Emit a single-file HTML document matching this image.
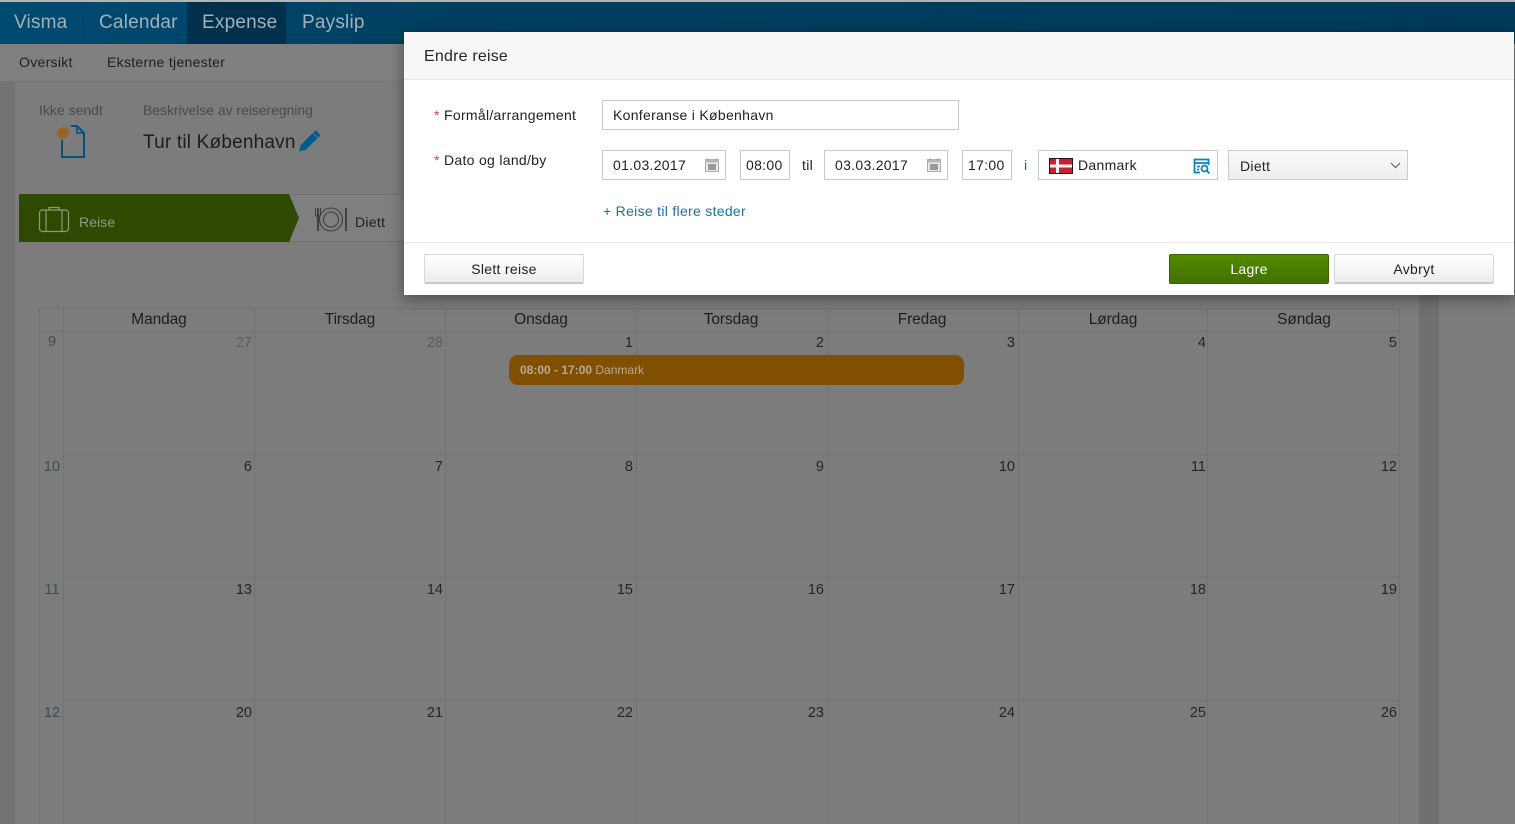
<!DOCTYPE html>
<html lang="no"><head><meta charset="utf-8"><title>Endre reise</title>
<style>
html,body{margin:0;padding:0;width:1515px;height:824px;overflow:hidden;background:#7c7c7c}
body{position:relative;font-family:"Liberation Sans",sans-serif;font-size:14px;color:#222}
div,span,a,svg{position:absolute}
.t{white-space:nowrap;line-height:18px;letter-spacing:.3px}
.nav{font-size:19px;color:#a2b1bb;line-height:24px;top:11px;white-space:nowrap;letter-spacing:.2px}
.h{top:311px;width:120px;text-align:center;font-size:15.5px;line-height:18px;color:#1d1d1d;letter-spacing:-.1px}
.n{width:30px;text-align:right;font-size:14.5px;line-height:16px;color:#252525}
.w{width:24px;left:40px;text-align:center;font-size:14.5px;line-height:16px;color:#404c55}
.vl{top:308px;width:1px;height:516px;background:#727272}
.hl{left:40px;width:1359px;height:1px;background:#727272}
.inp{background:#fff;border:1px solid #c8c8c8;box-sizing:border-box;height:30px}
.btn{box-sizing:border-box;height:30px;border-radius:2px;text-align:center;line-height:29px;white-space:nowrap;letter-spacing:.3px}
.g{background:linear-gradient(#fff,#ececec);border:1px solid #d8d8d8;border-bottom:2px solid #c9c9c9;color:#222}
</style></head><body>

<div style="left:0;top:0;width:15px;height:824px;background:#737373;top:81px"></div>
<div style="left:1419px;top:295px;width:20px;height:529px;background:#707070"></div>

<!-- top nav -->
<div style="left:0;top:0;width:1515px;height:2px;background:#b5b5b5"></div>
<div style="left:0;top:2px;width:1515px;height:42px;background:linear-gradient(90deg,#004a70 0,#003f60 30%,#003a5a 100%)"></div>
<div style="left:187px;top:2px;width:99px;height:42px;background:#00304c"></div>
<div style="left:83px;top:2px;width:1px;height:42px;background:#014163"></div>
<div style="left:286px;top:2px;width:1px;height:42px;background:#014163"></div>
<span class="nav" style="left:14px">Visma</span>
<span class="nav" style="left:99px">Calendar</span>
<span class="nav" style="left:202px">Expense</span>
<span class="nav" style="left:302px">Payslip</span>

<!-- sub nav -->
<div style="left:0;top:44px;width:1515px;height:37px;background:#808080;border-bottom:1px solid #757575"></div>
<span class="t" style="left:19px;top:53px;color:#1f1f1f">Oversikt</span>
<span class="t" style="left:107px;top:53px;color:#1f1f1f">Eksterne tjenester</span>

<!-- header -->
<span class="t" style="left:39px;top:101px;color:#4a4a4a;letter-spacing:0">Ikke sendt</span>
<span class="t" style="left:143px;top:101px;color:#4a4a4a;letter-spacing:-.05px">Beskrivelse av reiseregning</span>
<span class="t" style="left:143px;top:131px;font-size:19px;line-height:24px;color:#1d1d1d;letter-spacing:.2px">Tur til København</span>
<svg style="left:55px;top:124px" width="32" height="36" viewBox="0 0 32 36">
<path d="M7 16V33H29V9L22 2H16" fill="none" stroke="#00527f" stroke-width="2"/><path d="M22 2V9H29" fill="none" stroke="#00527f" stroke-width="1.6"/>
<path d="M8 2l1.3 2.2 2-1.4.2 2.5 2.5.2-1.4 2 2.2 1.3-2.2 1.300 1.400 2-2.500.200-.2 2.500-2-1.400L8 16l-1.300-2.200-2 1.400-.2-2.500-2.500-.2 1.400-2L1.200 9.200l2.200-1.300-1.400-2 2.500-.2.2-2.500 2 1.400z" fill="#9a6324"/></svg>
<svg style="left:298px;top:129px" width="24" height="24" viewBox="0 0 24 24"><path d="M1 22.500l1.800-6.500L16.500 2.300q1.200-1 2.300 0l2.700 2.700q1 1.100 0 2.300L7.800 20.800z" fill="#005c8d"/><path d="M15 4l5 5" stroke="#7c7c7c" stroke-width=".8"/></svg>

<!-- steps -->
<div style="left:19px;top:195px;width:400px;height:46px;background:#7f7f7f;border-top:1px solid #707070;border-bottom:1px solid #707070;box-sizing:content-box;top:194px"></div>
<svg style="left:19px;top:194px" width="281" height="48"><polygon points="0,0 270,0 280,24 270,48 0,48" fill="#2f4a00"/></svg>
<svg style="left:38px;top:205px" width="32" height="29" viewBox="0 0 32 29" fill="none" stroke="#8d9a80" stroke-width="1.200"><rect x="1.500" y="5" width="29" height="21.500" rx="3"/><path d="M8 5V26.500M24 5V26.500M11 5V2.500h10V5"/></svg>
<span class="t" style="left:79px;top:213px;color:#8f9a83;letter-spacing:.1px">Reise</span>
<svg style="left:313px;top:206px" width="36" height="27" viewBox="0 0 36 27" fill="none" stroke="#3f3f3f"><path d="M5 2V25" stroke-width="2"/><path d="M2.500 2V8q0 2.500 2.500 2.500T7.500 8V2" stroke-width="1"/><circle cx="18" cy="13.500" r="11.500" stroke-width="1.100"/><circle cx="18" cy="13.500" r="7.500" stroke-width="1.100"/><path d="M33 2V25" stroke-width="1.800"/></svg>
<span class="t" style="left:355px;top:213px;color:#1f1f1f">Diett</span>

<!-- calendar -->
<div style="left:40px;top:308px;width:1359px;height:1px;background:#727272"></div>
<div class="hl" style="top:331px"></div>
<div class="hl" style="top:454px;left:63px;width:1336px"></div>
<div class="hl" style="top:577px;left:63px;width:1336px"></div>
<div class="hl" style="top:700px;left:63px;width:1336px"></div>
<div class="vl" style="left:39px"></div><div class="vl" style="left:63px"></div><div class="vl" style="left:254px"></div><div class="vl" style="left:445px"></div><div class="vl" style="left:636px"></div><div class="vl" style="left:827px"></div><div class="vl" style="left:1018px"></div><div class="vl" style="left:1207px"></div><div class="vl" style="left:1399px"></div>

<span class="h" style="left:99px">Mandag</span><span class="h" style="left:290px">Tirsdag</span><span class="h" style="left:481px">Onsdag</span><span class="h" style="left:671px">Torsdag</span><span class="h" style="left:862px">Fredag</span><span class="h" style="left:1053px">Lørdag</span><span class="h" style="left:1244px">Søndag</span>

<span class="w" style="top:334px">9</span><span class="w" style="top:459px">10</span><span class="w" style="top:582px">11</span><span class="w" style="top:705px">12</span>

<span class="n" style="left:222px;top:335px;color:#5e5e5e">27</span><span class="n" style="left:413px;top:335px;color:#5e5e5e">28</span><span class="n" style="left:603px;top:335px">1</span><span class="n" style="left:794px;top:335px">2</span><span class="n" style="left:985px;top:335px">3</span><span class="n" style="left:1176px;top:335px">4</span><span class="n" style="left:1367px;top:335px">5</span>
<span class="n" style="left:222px;top:459px">6</span><span class="n" style="left:413px;top:459px">7</span><span class="n" style="left:603px;top:459px">8</span><span class="n" style="left:794px;top:459px">9</span><span class="n" style="left:985px;top:459px">10</span><span class="n" style="left:1176px;top:459px">11</span><span class="n" style="left:1367px;top:459px">12</span>
<span class="n" style="left:222px;top:582px">13</span><span class="n" style="left:413px;top:582px">14</span><span class="n" style="left:603px;top:582px">15</span><span class="n" style="left:794px;top:582px">16</span><span class="n" style="left:985px;top:582px">17</span><span class="n" style="left:1176px;top:582px">18</span><span class="n" style="left:1367px;top:582px">19</span>
<span class="n" style="left:222px;top:705px">20</span><span class="n" style="left:413px;top:705px">21</span><span class="n" style="left:603px;top:705px">22</span><span class="n" style="left:794px;top:705px">23</span><span class="n" style="left:985px;top:705px">24</span><span class="n" style="left:1176px;top:705px">25</span><span class="n" style="left:1367px;top:705px">26</span>

<div style="left:509px;top:355px;width:455px;height:30px;background:#805000;border-radius:9px"></div>
<span class="t" style="left:520px;top:361px;font-size:12px;color:#b7ab94;letter-spacing:0"><b>08:00 - 17:00</b> Danmark</span>

<!-- modal -->
<div style="left:404px;top:32px;width:1110px;height:263px;background:#fff;box-shadow:0 4px 14px rgba(0,0,0,.4)"></div>
<div style="left:404px;top:32px;width:1110px;height:47px;background:#f7f7f7;border-bottom:1px solid #e4e4e4"></div>
<span class="t" style="left:424px;top:47px;font-size:16px;line-height:20px;color:#252525;letter-spacing:.2px">Endre reise</span>

<span class="t" style="left:434px;top:106px;color:#d2444a">*</span><span class="t" style="left:444px;top:106px">Formål/arrangement</span>
<div class="inp" style="left:602px;top:100px;width:357px"></div>
<span class="t" style="left:613px;top:106px">Konferanse i København</span>

<span class="t" style="left:434px;top:151px;color:#d2444a">*</span><span class="t" style="left:444px;top:151px">Dato og land/by</span>

<div class="inp" style="left:602px;top:150px;width:124px"></div>
<span class="t" style="left:613px;top:156px">01.03.2017</span>
<svg style="left:705px;top:158px" width="14" height="14" viewBox="0 0 14 14"><rect x=".5" y="1.500" width="13" height="12" fill="#e8e8e8" stroke="#aaa"/><rect x=".5" y="1.500" width="13" height="3" fill="#b8b8b8"/><rect x="3" y="6" width="8" height="6" fill="#999"/><path d="M3 .5v2M11 .5v2" stroke="#888"/></svg>
<div class="inp" style="left:740px;top:150px;width:50px"></div>
<span class="t" style="left:746px;top:156px">08:00</span>
<span class="t" style="left:802px;top:156px">til</span>
<div class="inp" style="left:824px;top:150px;width:124px"></div>
<span class="t" style="left:835px;top:156px">03.03.2017</span>
<svg style="left:927px;top:158px" width="14" height="14" viewBox="0 0 14 14"><rect x=".5" y="1.500" width="13" height="12" fill="#e8e8e8" stroke="#aaa"/><rect x=".5" y="1.500" width="13" height="3" fill="#b8b8b8"/><rect x="3" y="6" width="8" height="6" fill="#999"/><path d="M3 .5v2M11 .5v2" stroke="#888"/></svg>
<div class="inp" style="left:962px;top:150px;width:50px"></div>
<span class="t" style="left:968px;top:156px">17:00</span>
<span class="t" style="left:1024px;top:156px;color:#1b5f8c">i</span>
<div class="inp" style="left:1038px;top:150px;width:180px"></div>
<svg style="left:1049px;top:158px" width="24" height="16" viewBox="0 0 24 16"><rect width="24" height="16" fill="#c8202f"/><rect y="6.500" width="24" height="3" fill="#f2f2f2"/><rect x="7" width="3" height="16" fill="#f2f2f2"/><rect x=".5" y=".5" width="23" height="15" fill="none" stroke="#301015"/></svg>
<span class="t" style="left:1078px;top:156px">Danmark</span>
<svg style="left:1193px;top:158px" width="18" height="16" viewBox="0 0 18 16" fill="none" stroke="#0a7fc4" stroke-width="1.800"><path d="M7 14.500H1.500V1.500H15.500V7"/><path d="M1.500 5H15.500M4 8.500H7M4 11.500H6" /><circle cx="11.500" cy="10.500" r="3"/><path d="M13.800 12.800l2.700 2.700"/></svg>
<div style="left:1228px;top:150px;width:180px;height:30px;box-sizing:border-box;border:1px solid #ccc;background:linear-gradient(#fafafa,#ededed)"></div>
<span class="t" style="left:1240px;top:157px">Diett</span>
<svg style="left:1390px;top:162px" width="11" height="7" viewBox="0 0 11 7"><path d="M1 1l4.500 4.500L10 1" fill="none" stroke="#666" stroke-width="1.200"/></svg>

<span class="t" style="left:603px;top:202px;color:#1e6fa3">+ Reise til flere steder</span>

<div style="left:404px;top:242px;width:1110px;height:1px;background:#e6e6e6"></div>
<div class="btn g" style="left:424px;top:254px;width:160px">Slett reise</div>
<div class="btn" style="left:1169px;top:254px;width:160px;background:linear-gradient(#548a00,#437000);border:1px solid #3a6200;color:#fff">Lagre</div>
<div class="btn g" style="left:1334px;top:254px;width:160px">Avbryt</div>
</body></html>
